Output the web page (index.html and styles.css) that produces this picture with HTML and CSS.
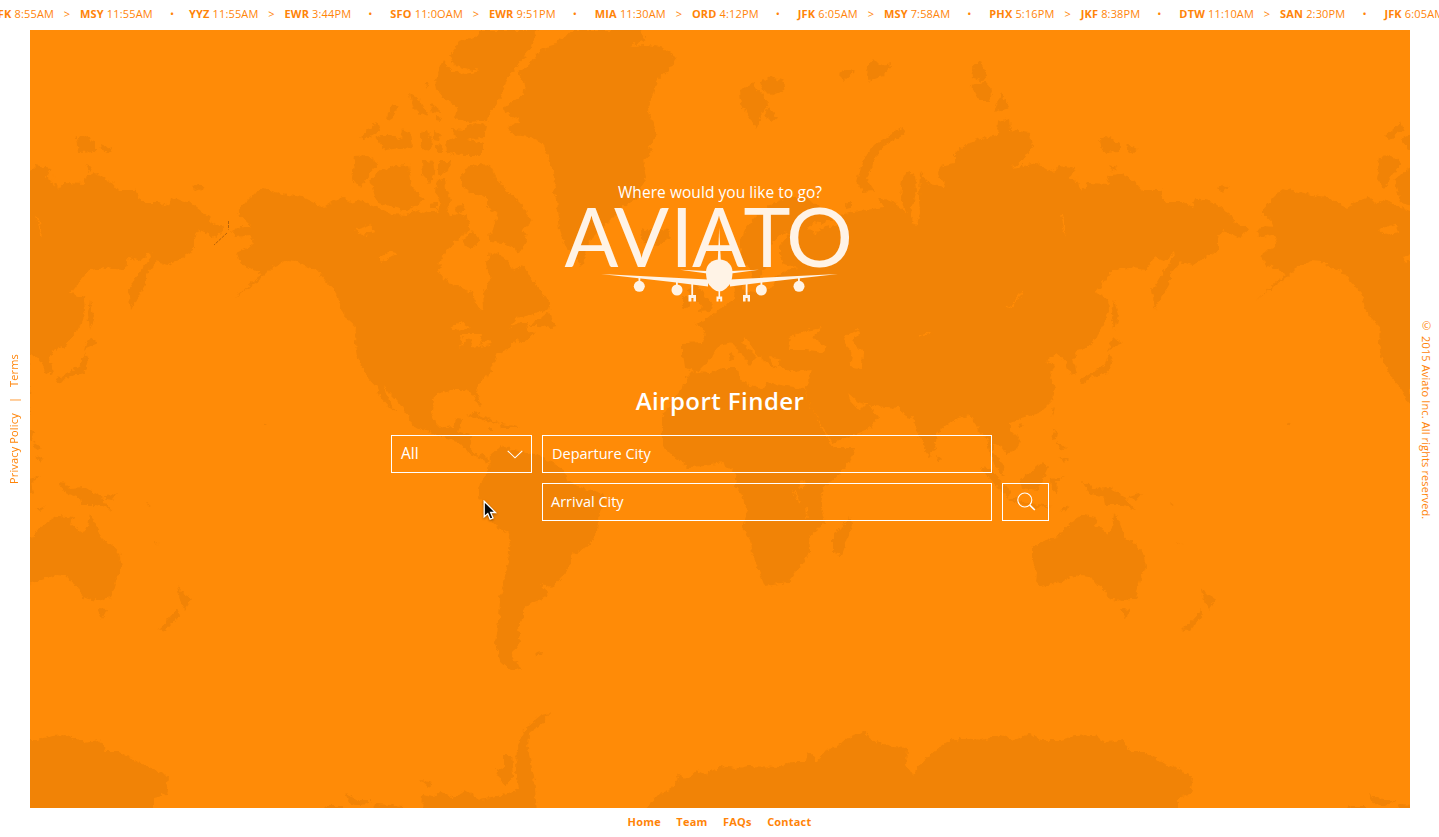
FILE: index.html
```html
<!DOCTYPE html>
<html lang="en">
<head>
<meta charset="utf-8">
<title>Aviato</title>
<link rel="stylesheet" href="styles.css">
</head>
<body>
<div class="page">
  <header class="ticker">
    <div class="track">
      <span class="flight"><span><b>JFK</b> 8:55AM</span><i>&gt;</i><span><b>MSY</b> 11:55AM</span></span><span class="dot tight">•</span>
      <span class="flight"><span><b>YYZ</b> 11:55AM</span><i>&gt;</i><span><b>EWR</b> 3:44PM</span></span><span class="dot">•</span>
      <span class="flight"><span><b>SFO</b> 11:0OAM</span><i>&gt;</i><span><b>EWR</b> 9:51PM</span></span><span class="dot">•</span>
      <span class="flight"><span><b>MIA</b> 11:30AM</span><i>&gt;</i><span><b>ORD</b> 4:12PM</span></span><span class="dot">•</span>
      <span class="flight"><span><b>JFK</b> 6:05AM</span><i>&gt;</i><span><b>MSY</b> 7:58AM</span></span><span class="dot">•</span>
      <span class="flight"><span><b>PHX</b> 5:16PM</span><i>&gt;</i><span><b>JKF</b> 8:38PM</span></span><span class="dot">•</span>
      <span class="flight"><span><b>DTW</b> 11:10AM</span><i>&gt;</i><span><b>SAN</b> 2:30PM</span></span><span class="dot">•</span>
      <span class="flight"><span><b>JFK</b> 6:05AM</span></span>
    </div>
  </header>
  <aside class="side left"><a>Privacy Policy</a><span>|</span><a>Terms</a></aside>
  <main class="stage">
    <svg class="map" viewBox="30 30 1380 778" width="1380" height="778" aria-hidden="true">
      <defs>
        <filter id="coast" filterUnits="userSpaceOnUse" x="30" y="30" width="1380" height="778" color-interpolation-filters="sRGB">
          <feTurbulence type="fractalNoise" baseFrequency="0.2" numOctaves="3" seed="4" result="n"/>
          <feDisplacementMap in="SourceGraphic" in2="n" scale="6.5" xChannelSelector="R" yChannelSelector="G"/>
        </filter>
        <g id="world">
          <g class="land">
            <!-- North and Central America -->
            <path d="M246 202L254 194 263 188 275 192 287 195 303 197 315 203 323 208 334 201 345 197 352 204 360 200 370 205 380 209 392 214 407 215 418 210 427 213 437 213 441 203 447 206 450 217 458 213 467 217 470 230 457 240 447 250 440 260 439 270 444 279 458 287 473 292 475 302 480 310 484 308 483 293 490 280 487 264 490 252 498 254 507 260 511 268 517 270 523 265 530 277 540 290 550 303 549 310 538 313 527 316 516 318 508 328 520 322 528 322 526 331 537 332 522 342 516 340 507 350 498 353 495 360 491 364 492 372 484 378 478 384 477 393 481 406 477 404 473 393 465 390 450 390 441 392 433 398 432 413 435 423 440 428 452 426 457 418 463 419 458 432 472 435 470 447 477 456 483 454 488 459 487 463 478 458 468 452 460 443 447 438 437 436 427 430 418 428 410 423 408 415 398 402 390 394 384 386 387 397 397 413 390 408 381 398 377 388 368 378 362 366 357 357 355 343 356 327 348 320 342 311 337 293 325 280 317 270 307 267 298 262 287 261 280 264 273 267 262 278 253 284 233 300 253 281 262 275 250 268 240 263 237 253 250 247 254 240 249 235 237 237 232 231 241 226 250 227 248 222 237 212Z"/>
            <!-- Canadian Arctic -->
            <path d="M450 55L460 42 473 37 482 30 537 30 530 50 518 64 507 80 500 98 487 120 470 122 455 119 457 107 447 101 437 90 435 79 443 60 451 70 466 74 480 71 468 69 455 66Z"/>
            <path d="M452 129L466 130 470 123 487 125 484 138 466 139 483 143 483 155 462 155 447 153 446 141 455 137ZM360 137L377 122 380 130 365 140ZM376 138L385 150 400 148 413 147 411 133 402 129 400 140 392 135 382 135ZM388 112L394 105 397 107 393 118 387 122ZM409 94L420 100 428 114 420 115 413 108ZM430 104L438 107 439 113 432 112ZM421 132L428 130 433 145 430 151 424 150 421 143ZM433 130L441 134 439 141 433 140ZM436 145L442 144 443 152 436 152ZM436 117L443 118 441 122 436 121ZM424 83L429 83 427 88Z"/>
            <path d="M355 157L368 156 378 163 370 173 360 188 352 178ZM370 180L382 170 395 166 409 165 412 187 425 200 407 211 390 206 377 203ZM422 160L433 162 435 174 430 183 423 176ZM438 161L451 161 448 170 438 176ZM437 180L445 177 446 190 451 200 447 207 439 200 435 190ZM467 167L478 164 490 165 496 177 503 187 520 203 533 222 523 228 527 240 520 252 510 246 503 243 490 242 487 237 493 231 497 213 487 207 487 197 470 193 463 186 461 175ZM463 240L472 231 480 240 473 248 465 247ZM455 206L464 205 466 210 457 213ZM430 203L437 201 437 208 430 208Z"/>
            <!-- Greenland and Iceland -->
            <path d="M540 50L553 46 560 38 567 37 573 30 642 30 645 40 630 46 648 45 660 47 667 52 677 58 668 70 657 80 653 95 648 110 657 133 650 146 652 152 643 160 647 176 640 186 643 195 623 207 607 223 590 240 585 256 582 267 573 257 565 245 560 230 557 200 553 191 556 183 553 173 549 158 543 143 530 137 513 135 507 127 520 121 503 111 506 106 523 95 525 85 518 73 530 64Z"/>
            <path d="M641 228L648 232 652 228 668 230 670 238 660 245 648 244 642 241Z"/>
            <!-- Caribbean -->
            <path d="M466 416L475 413 492 420 499 424 486 421 475 417ZM501 424L513 426 519 428 502 428ZM488 428L493 428 493 430 487 430ZM529 326L549 312 552 320 558 327 551 328 540 326Z"/>
            <!-- South America -->
            <path d="M503 446L496 450 490 455 489 470 480 483 478 497 481 502 487 513 497 527 510 535 509 552 506 573 500 597 499 622 495 643 500 660 512 671 523 668 514 661 512 654 518 644 522 633 517 630 523 618 523 610 533 602 547 597 545 589 541 584 553 587 562 577 570 567 572 555 580 550 590 545 597 533 598 518 605 503 604 495 592 491 580 488 567 481 565 471 554 464 543 457 532 453 520 451 511 450ZM536 652L542 651 541 655 537 655Z"/>
            <!-- Europe and Asia -->
            <path d="M740 262L741 240 746 228 755 217 766 207 778 201 790 197 803 197 815 203 829 212 832 220 822 224 812 223 808 228 815 235 822 228 838 224 840 215 853 212 867 210 883 207 877 197 893 202 907 213 900 197 902 180 907 172 915 175 917 190 913 205 911 223 917 225 920 213 919 198 920 172 930 184 946 188 938 173 940 166 955 163 955 153 967 143 985 138 997 135 998 122 1009 118 1010 130 1030 133 1032 147 1024 158 1013 168 1037 163 1053 172 1060 165 1075 168 1070 178 1077 182 1082 190 1087 183 1110 184 1107 177 1120 173 1135 182 1142 190 1160 190 1165 202 1183 202 1193 207 1195 198 1213 202 1233 217 1235 223 1248 228 1240 238 1223 230 1218 237 1218 250 1205 258 1193 265 1180 262 1170 274 1170 283 1155 310 1152 290 1163 272 1175 257 1174 252 1165 261 1153 258 1147 270 1130 268 1113 270 1095 293 1108 298 1109 311 1104 325 1097 336 1090 346 1077 350 1073 359 1077 373 1070 375 1066 362 1056 354 1047 360 1055 365 1050 377 1055 387 1053 400 1040 413 1022 418 1010 423 1010 430 1020 440 1018 448 1008 455 1002 447 993 443 993 453 1003 463 1004 476 995 466 990 453 988 437 980 433 977 425 970 415 957 418 937 433 935 450 929 457 922 443 916 427 913 417 907 419 900 408 873 406 858 402 847 392 850 400 860 411 868 403 873 411 878 417 870 428 833 443 823 427 807 400 806 388 811 370 793 372 778 366 780 358 770 357 776 370 768 363 757 355 746 337 742 342 757 357 753 361 749 366 741 354 732 342 718 347 707 363 700 370 693 371 685 367 683 354 683 343 703 342 705 332 695 323 706 320 716 312 722 307 734 300 735 287 742 281 744 291 760 292 773 287 775 278 787 270 797 268 784 264 780 254 780 245 790 234 782 233 770 246 770 256 765 268 760 283 754 282 750 267Z"/>
            <path d="M687 289L697 284 702 292 712 304 711 311 699 312 701 304 694 301ZM682 297L690 299 690 306 682 309ZM729 354L732 352 733 360 730 362Z"/>
            <!-- Arctic islands of Eurasia -->
            <path d="M740 90L753 84 768 103 763 112 756 129 748 115 741 104ZM760 83L770 77 785 81 784 91 773 95 762 89ZM768 106L777 118 772 122 765 115ZM838 73L847 70 855 71 845 80ZM866 68L872 58 880 66 893 64 884 75 874 77 870 82ZM973 65L981 61 987 76 983 81 974 78ZM970 85L985 82 993 91 989 101 980 101 975 92ZM1001 93L1009 108 994 113ZM903 127L905 134 884 145 873 162 867 180 874 191 863 192 857 181 863 160 874 145 888 136ZM1100 138L1107 136 1120 143 1120 151 1102 152ZM1125 144L1137 150 1132 153 1126 149ZM1109 165L1117 168 1112 171ZM1217 188L1222 184 1228 188 1220 191ZM846 204L851 202 851 207 847 208Z"/>
            <!-- Africa and Madagascar -->
            <path d="M692 372L710 373 722 368 738 368 740 380 752 386 763 390 768 382 785 386 805 388 807 400 815 414 823 430 833 448 855 448 850 462 840 474 823 488 820 503 825 523 809 537 810 551 800 567 787 583 765 586 760 573 752 553 750 540 743 528 748 510 742 494 735 485 737 473 722 463 705 466 687 467 672 455 662 445 662 417 671 403 683 387 686 378ZM849 517L852 525 842 555 833 553 833 533 843 527Z"/>
            <!-- South-east Asia and Japan -->
            <path d="M936 455L941 459 938 463ZM981 467L990 469 1010 491 1009 497 998 488ZM1020 478L1031 472 1043 462 1048 468 1038 490 1022 488ZM1008 498L1024 501 1036 504 1052 506 1036 508 1009 501ZM1050 479L1064 477 1056 482 1058 494 1051 488ZM1054 429L1057 431 1056 439 1052 440ZM1059 455L1068 459 1064 463ZM1057 441L1066 448 1060 450ZM1018 424L1024 423 1022 428ZM1052 410L1055 407 1053 416ZM1082 483L1090 484 1094 489 1110 488 1125 497 1136 510 1120 505 1105 505 1104 498 1089 493ZM1126 498L1142 493 1136 500ZM1060 509L1070 506 1063 511ZM1114 300L1118 316 1114 330 1112 313ZM1115 338L1122 343 1111 348 1108 351 1110 343ZM1109 353L1112 360 1108 373 1094 376 1082 383 1080 380 1095 371 1104 366Z"/>
            <!-- Oceania -->
            <path d="M1032 547L1044 541 1057 537 1063 529 1072 522 1083 515 1097 517 1095 525 1108 533 1112 528 1114 513 1120 524 1125 538 1135 544 1143 553 1146 567 1140 580 1135 598 1122 601 1108 598 1102 586 1095 583 1090 576 1080 575 1060 582 1040 587 1036 582 1037 573 1032 559ZM1121 608L1131 609 1126 619ZM1201 586L1207 594 1216 599 1209 610 1205 604ZM1202 609L1204 614 1190 631 1182 629 1192 620ZM1177 540L1183 545 1177 541ZM1171 503L1176 507 1170 504ZM1288 422L1291 424 1288 426Z"/>
            <!-- Antarctica -->
            <path d="M551 713L540 725 529 733 528 750 534 777 537 812 422 812 423 795 433 797 440 791 455 798 465 791 480 800 496 797 519 789 516 772 517 748 521 738 528 726 541 715ZM504 755L511 755 513 776 505 786 498 776 495 768 504 770ZM420 780L434 783 428 787ZM345 793L357 800 372 800 362 806 350 804ZM326 806L342 806 342 812 320 812ZM375 804L404 806 404 812 372 812Z"/>
            <path d="M643 812L658 795 675 787 679 774 687 779 697 770 705 774 720 767 735 769 748 766 780 767 792 761 806 761 808 751 817 762 826 751 840 744 850 736 863 732 876 742 891 746 907 747 906 765 913 776 922 762 936 750 949 741 964 738 982 740 1000 735 1015 740 1030 733 1040 740 1061 740 1076 736 1092 735 1107 742 1124 740 1130 752 1144 752 1161 762 1180 770 1193 777 1190 794 1178 797 1178 812Z"/>
          </g>
          <g class="sea">
            <!-- Inland waters -->
            <path d="M788 350L790 337 800 332 822 328 812 337 827 347 823 352 807 350ZM843 337L857 330 861 332 852 341 863 352 862 368 850 367 852 355ZM450 328L461 322 471 328 457 331ZM460 348L462 334 482 334 479 345 489 341 492 344 473 347 470 337ZM355 229L371 224 374 232 362 235ZM379 258L390 252 398 253 382 262ZM800 481L805 480 804 489 799 489Z"/>
            <path class="lake" d="M1021 291Q1018 304 1007 308M919 337L932 332M806 507L807 520M794 490L799 504M1061 215L1066 236M1078 175L1075 183"/>
          </g>
        </g>
      </defs>
      <g filter="url(#coast)">
        <use href="#world"/>
        <use href="#world" x="-1024"/>
        <use href="#world" x="1024"/>
      </g>
      <path class="scratch" d="M228.500 221V229.500M227 233L214 245"/>
    </svg>

    <section class="hero">
      <p class="question">Where would you like to go?</p>
      <svg class="logo" viewBox="560 202 294 104" width="294" height="104" role="img" aria-label="Aviato">
        <g class="wordmark">
          <text x="564.500" y="267" textLength="54" lengthAdjust="spacingAndGlyphs">A</text>
          <text x="614" y="267" textLength="55" lengthAdjust="spacingAndGlyphs">V</text>
          <text x="670.500" y="267">I</text>
          <text x="692" y="267" textLength="54" lengthAdjust="spacingAndGlyphs">A</text>
          <text x="743.500" y="267" textLength="47" lengthAdjust="spacingAndGlyphs">T</text>
          <text x="786" y="267" textLength="67" lengthAdjust="spacingAndGlyphs">O</text>
        </g>
        <g class="plane">
          <path d="M719.200 228L720.800 260H717.800Z"/>
          <path d="M719.300 259.500C727 259.500 732.500 265 732.500 272C732.500 276 732 280 730 284C727 288 723 291.500 719.300 291.500C715.500 291.500 711.500 288 708.500 284C706.500 280 706 276 706 272C706 265 711.500 259.500 719.300 259.500Z"/>
          <path d="M680 269.800L707 271V273.500ZM759 269.800L731 271V273.500ZM601 274L708 279.500V286.500L672 282ZM838 274L730 279.500V286.500L767 282Z"/>
          <circle cx="639.300" cy="286.300" r="5.500"/><circle cx="677" cy="290" r="5.500"/>
          <circle cx="761.300" cy="290" r="5.500"/><circle cx="799" cy="286.300" r="5.500"/>
          <path d="M638.500 277h1.800v5h-1.800zM676 281h1.800v5H676zM760.500 281h1.800v5h-1.800zM798 277h1.800v5H798zM691.300 284h1.800v11h-1.800zM745.700 284h1.800v11h-1.800zM718.500 290h1.600v7h-1.600z"/>
          <path d="M688.500 295h7.500v6.500h-2.600v-3.500h-2v3.500h-2.900zM743 295h7v6.500h-2.400v-3.500h-2v3.500H743zM716.500 296.500h5.700v5h-2v-2.500h-1.700v2.500h-2z"/>
        </g>
      </svg>
    </section>

    <form class="finder">
      <h1>Airport Finder</h1>
      <div class="fields">
        <div class="select"><span>All</span>
          <svg width="16" height="9" viewBox="0 0 16 9"><path d="M.7 .8L8 7.800 15.300 .8"/></svg>
        </div>
        <div class="input">Departure City</div>
        <div class="input arrival">Arrival City</div>
        <div class="search">
          <svg width="19" height="19" viewBox="0 0 19 19"><circle cx="7.800" cy="8" r="7"/><path class="handle" d="M12.800 13.200L17.800 18"/></svg>
        </div>
      </div>
    </form>
    <svg class="cursor" width="15" height="22" viewBox="0 0 15 22"><path d="M1.200 1.200V16.800L4.800 13.500 7.200 19.200 10 18 7.600 12.500H12.500Z"/></svg>
  </main>
  <aside class="side right"><span>© 2015 Aviato Inc. All rights reserved.</span></aside>
  <footer class="links"><a>Home</a><a>Team</a><a>FAQs</a><a>Contact</a></footer>
</div>
</body>
</html>
```
FILE: styles.css
```css
* { box-sizing: border-box; }
body { margin: 0; background: #fff; color: #ff8408; font-family: "Open Sans", sans-serif; }
.page {
  display: grid;
  grid-template: 30px 778px 29px / 30px 1380px 29px;
  width: 1439px;
  height: 837px;
  overflow: hidden;
  font-size: 11px;
}
.ticker { grid-column: 1 / -1; display: flex; align-items: flex-start; overflow: hidden; }
.track { display: flex; flex: none; margin-left: -6px; line-height: 28px; height: 28px; white-space: nowrap; letter-spacing: .16px; }
.flight { display: flex; }
.flight i { font-style: normal; width: 26px; text-align: center; }
.dot { width: 39px; padding-left: 17px; font-size: 11px; }
.dot.tight { width: 36px; }

.side { display: flex; align-items: center; justify-content: center; padding-left: 3px; writing-mode: vertical-rl; white-space: nowrap; line-height: 20px; }
.left { transform: rotate(180deg); gap: 10px; letter-spacing: .15px; }
.right { letter-spacing: .12px; }

.stage { position: relative; display: flex; flex-direction: column; align-items: center; background: #ff8b07; color: #fff; overflow: hidden; }
.map { position: absolute; inset: 0; }
.land { fill: #f18306; }
.sea { fill: #ff8b07; }
.lake { fill: none; stroke: #ff8b07; stroke-width: 1.5; }
.scratch { fill: none; stroke: #a85a08; stroke-width: .8; stroke-dasharray: 3 1; }

.hero { position: relative; display: flex; flex-direction: column; align-items: center; padding-top: 151px; }
.question { margin: 0; line-height: 22px; font-size: 15.500px; font-weight: 500; letter-spacing: .06px; }
.logo { display: block; margin: -1px 26px 0 0; fill: #fff3e6; overflow: visible; }
.wordmark { font: 400 81px Lato, sans-serif; }

.finder { position: relative; width: 658px; padding-top: 76px; }
h1 { margin: 0; text-align: center; font-size: 24px; font-weight: 600; line-height: 38px; letter-spacing: .45px; }
.fields { display: grid; grid-template: 38px 38px / 141px 450px 47px; gap: 10px; margin-top: 15px; font-size: 14.500px; }
.select, .input, .search { display: flex; align-items: center; border: 1px solid #fff; }
.select { justify-content: space-between; padding: 0 8px 0 9px; font-size: 15.500px; }
.select span { padding-bottom: 3px; }
.input { padding: 0 0 2px 9px; }
.arrival { grid-column: 2; padding-left: 8px; }
.search { justify-content: center; padding: 0 0 1px 2px; }
.fields svg { fill: none; stroke: #fff; stroke-width: 1.1; }
.fields .handle { stroke-width: 1.600; }
.cursor { position: absolute; left: 453px; top: 470px; fill: #080808; stroke: #fff; stroke-width: 1.300; filter: drop-shadow(0 1px 1px #0006); }

.links { grid-column: 1 / -1; display: flex; justify-content: center; gap: 15.500px; line-height: 28px; font-weight: 700; letter-spacing: .2px; }
```
